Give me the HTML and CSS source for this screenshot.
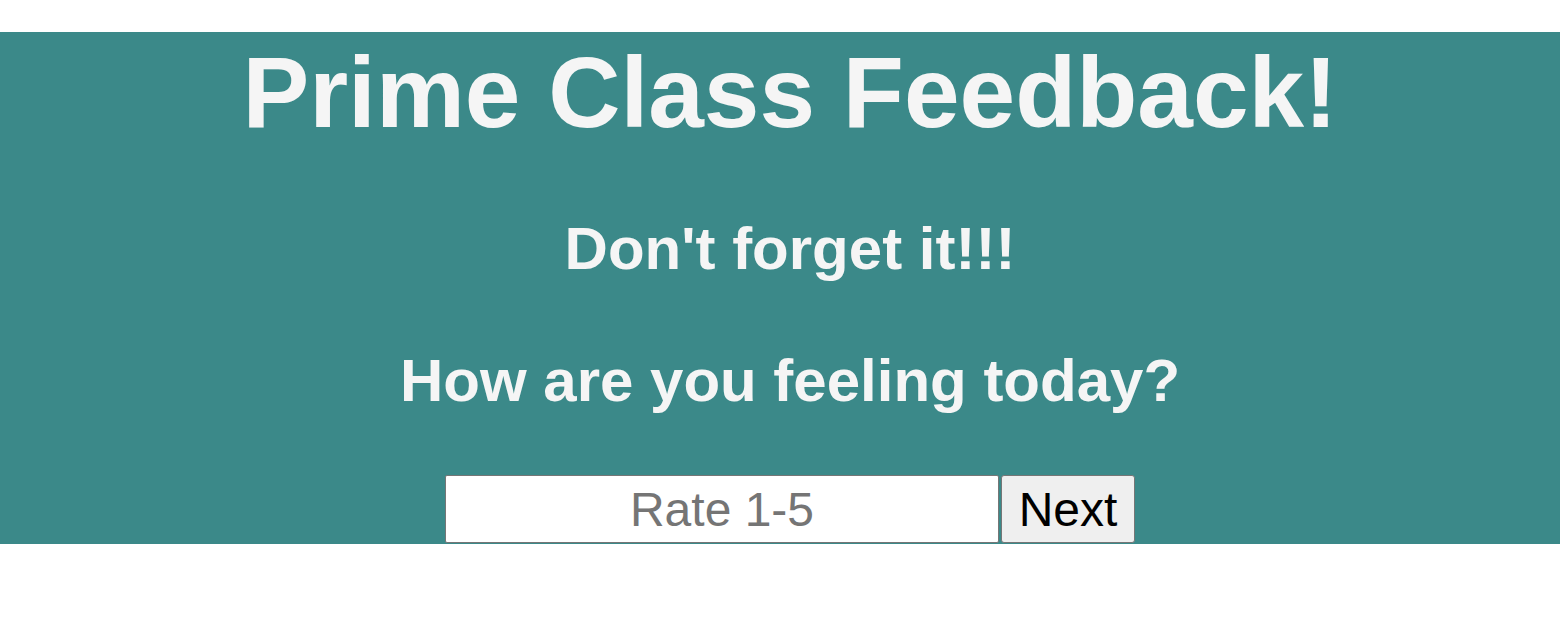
FILE: index.html
```html
<!DOCTYPE html>
<html lang="en">
<head>
<meta charset="utf-8">
<title>Prime Class Feedback!</title>
<link rel="stylesheet" href="styles.css">
</head>
<body>
  <main class="banner">
    <h1 class="title">Prime Class Feedback!</h1>
    <h2 class="subtitle">Don't forget it!!!</h2>
    <h2 class="question">How are you feeling today?</h2>
    <form class="rate-form" onsubmit="return false;">
      <input class="rate-input" type="text" placeholder="Rate 1-5">
      <button class="next-btn" type="submit">Next</button>
    </form>
  </main>
</body>
</html>
```

FILE: styles.css
```css
html, body {
  margin: 0;
  padding: 0;
  background: #ffffff;
}

body {
  font-family: "Liberation Sans", Arial, Helvetica, sans-serif;
}

.banner {
  margin-top: 32px;
  padding: 3px 0 1px 20px;
  background: #3b8989;
  color: #f5f5f5;
  text-align: center;
  display: flex;
  flex-direction: column;
  align-items: center;
}

.title {
  margin: 0;
  font-size: 100px;
  font-weight: bold;
  line-height: normal;
}

.subtitle,
.question {
  margin: 64px 0 0;
  font-size: 60px;
  font-weight: bold;
  line-height: normal;
}

.question {
  margin-top: 63px;
}

.rate-form {
  margin-top: 60px;
  display: flex;
  gap: 2px;
}

.rate-input {
  box-sizing: border-box;
  width: 554px;
  height: 68px;
  margin: 0;
  padding: 0 4px;
  border: 1px solid #767676;
  border-radius: 2px;
  background: #ffffff;
  font-family: "Liberation Sans", Arial, sans-serif;
  font-size: 48px;
  color: #000;
  text-align: center;
}

.rate-input::placeholder {
  color: #757575;
  opacity: 1;
}

.next-btn {
  box-sizing: border-box;
  width: 134px;
  height: 68px;
  margin: 0;
  padding: 0 6px;
  border: 1px solid #767676;
  border-radius: 3px;
  background: #efefef;
  color: #000;
  font-family: "Liberation Sans", Arial, sans-serif;
  font-size: 48px;
}
```
